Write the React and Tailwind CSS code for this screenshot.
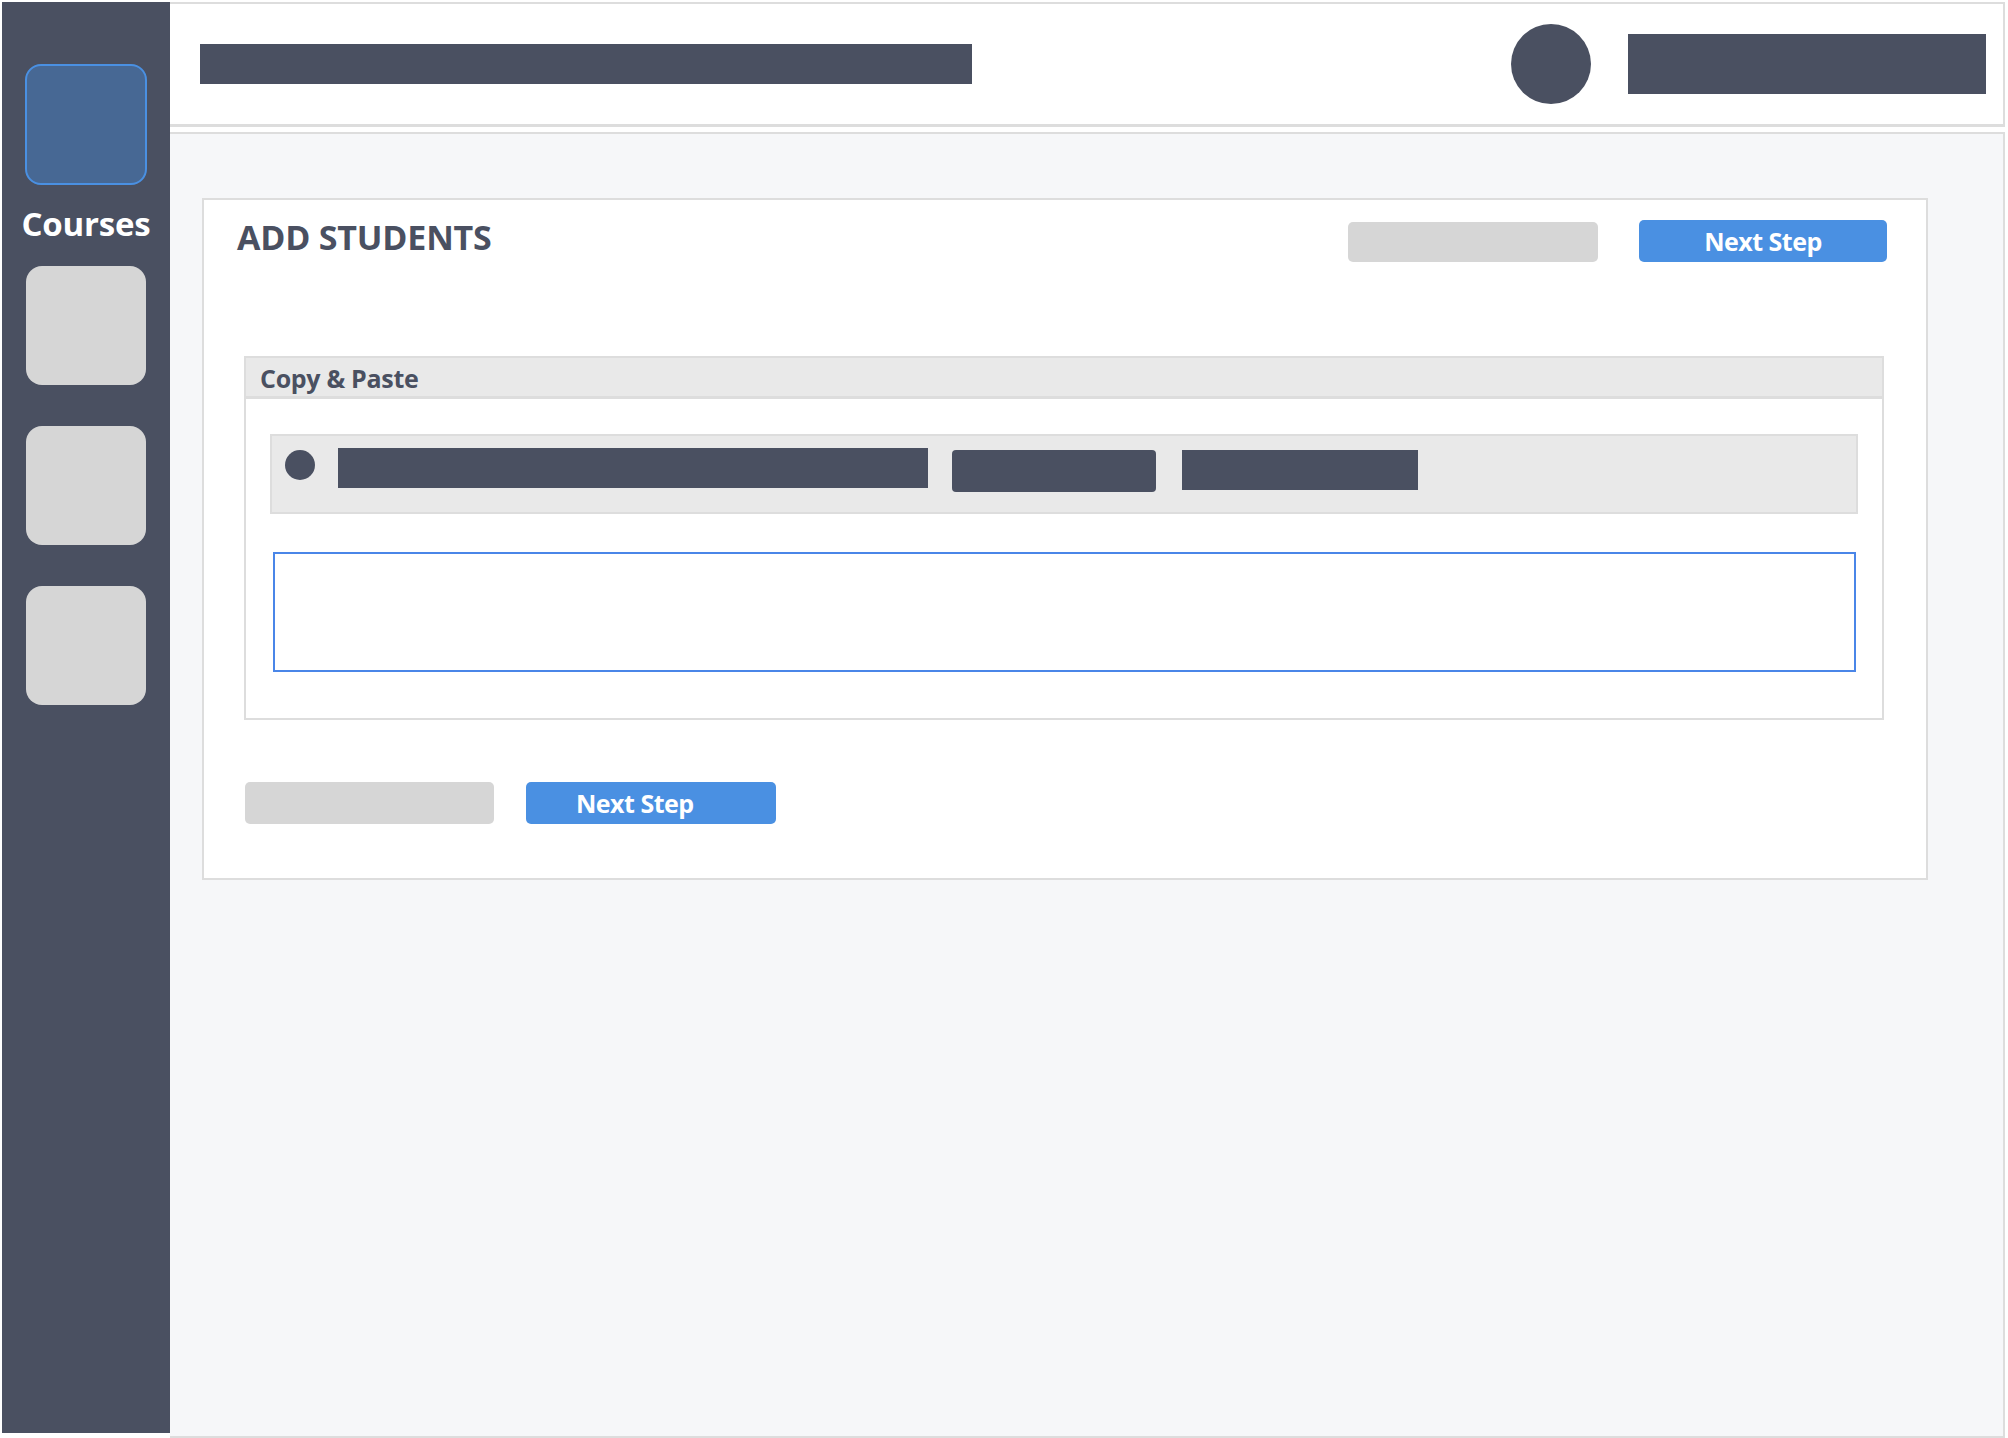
export default function App() {
  return (
    <div className="w-[2008px] h-[1438px] bg-white flex font-['Open_Sans','Liberation_Sans',sans-serif] overflow-hidden">
      {/* Sidebar */}
      <aside className="mt-[2px] ml-[2px] w-[168px] h-[1431px] bg-[#4a5061] flex flex-col items-center pt-[62px] shrink-0">
        <div className="w-[122px] h-[121px] rounded-[16px] border-2 border-[#4a90e2] bg-[#476894]" />
        <div className="mt-[22px] text-[33px] leading-[33px] font-bold text-white tracking-[-0.2px]">Courses</div>
        <div className="mt-[26px] w-[120px] h-[119px] rounded-[16px] bg-[#d6d6d6]" />
        <div className="mt-[41px] w-[120px] h-[119px] rounded-[16px] bg-[#d6d6d6]" />
        <div className="mt-[41px] w-[120px] h-[119px] rounded-[16px] bg-[#d6d6d6]" />
      </aside>

      {/* Right column */}
      <div className="w-[1835px] flex flex-col shrink-0">
        {/* Header */}
        <header className="mt-[2px] h-[125px] bg-white border-t-2 border-r-2 border-b-[3px] border-[#dddddd] flex items-center pl-[30px] pr-[17px]">
          <div className="w-[772px] h-[40px] bg-[#4a5061]" />
          <div className="flex-1" />
          <div className="w-[80px] h-[80px] rounded-full bg-[#4a5061]" />
          <div className="ml-[37px] w-[358px] h-[60px] bg-[#4a5061]" />
        </header>

        {/* Main */}
        <main className="mt-[5px] h-[1306px] bg-[#f6f7f9] border-t-2 border-r-2 border-b-2 border-[#dddddd] pt-[64px] pl-[32px]">
          <section className="w-[1726px] bg-white border-2 border-[#dddddd] pt-[20px] pb-[54px]">
            <div className="flex items-start pl-[33px] pr-[39px]">
              <h1 className="text-[34px] leading-[34px] font-bold text-[#4a5061] tracking-[-0.2px]">ADD STUDENTS</h1>
              <div className="flex-1" />
              <div className="mt-[2px] w-[250px] h-[40px] rounded-[5px] bg-[#d6d6d6]" />
              <button className="ml-[41px] w-[248px] h-[42px] rounded-[5px] bg-[#4a90e2] text-white text-[25px] leading-[25px] font-bold flex items-center justify-center tracking-[-0.5px]">
                Next Step
              </button>
            </div>

            {/* Copy & Paste box */}
            <div className="mt-[94px] ml-[40px] mr-[42px] border-2 border-[#dddddd] pb-[46px]">
              <div className="h-[41px] bg-[#e9e9e9] border-b-[3px] border-[#dddddd] pt-[8px] pl-[14px]">
                <span className="block text-[25px] leading-[25px] font-bold text-[#4a5061] tracking-[-0.3px]">Copy &amp; Paste</span>
              </div>
              <div className="mt-[35px] mx-[24px] h-[80px] bg-[#e9e9e9] border-2 border-[#dddddd] flex items-start pl-[13px]">
                <div className="mt-[14px] w-[30px] h-[30px] rounded-full bg-[#4a5061]" />
                <div className="mt-[12px] ml-[23px] w-[590px] h-[40px] bg-[#4a5061]" />
                <div className="mt-[14px] ml-[24px] w-[204px] h-[42px] rounded-[4px] bg-[#4a5061]" />
                <div className="mt-[14px] ml-[26px] w-[236px] h-[40px] bg-[#4a5061]" />
              </div>
              <div className="mt-[38px] ml-[27px] mr-[26px] h-[120px] bg-white border-2 border-[#4a86e8]" />
            </div>

            {/* Bottom buttons */}
            <div className="mt-[62px] ml-[41px] flex items-center">
              <div className="w-[249px] h-[42px] rounded-[5px] bg-[#d6d6d6]" />
              <button className="ml-[32px] w-[250px] h-[42px] rounded-[5px] bg-[#4a90e2] text-white text-[25px] leading-[25px] font-bold flex items-center justify-start pl-[50px] tracking-[-0.5px]">
                Next Step
              </button>
            </div>
          </section>
        </main>
      </div>
    </div>
  );
}
